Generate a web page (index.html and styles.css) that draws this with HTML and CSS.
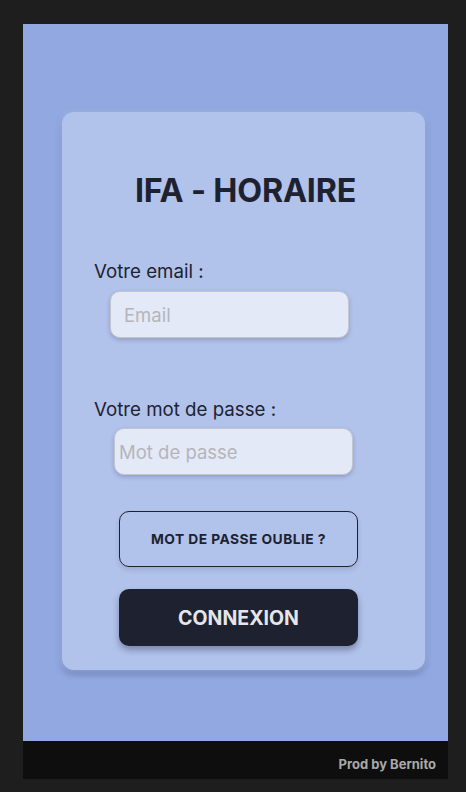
FILE: index.html
```html
<!DOCTYPE html>
<html lang="fr">
<head>
<meta charset="utf-8">
<title>IFA - HORAIRE</title>
<link rel="stylesheet" href="styles.css">
</head>
<body>
<div class="device">
  <main class="screen">
    <form class="card">
      <h1 class="title">IFA - HORAIRE</h1>
      <label class="label label-email">Votre email :</label>
      <input class="field field-email" type="email" placeholder="Email">
      <label class="label label-pass">Votre mot de passe :</label>
      <input class="field field-pass" type="password" placeholder="Mot de passe">
      <button type="button" class="btn btn-outline">MOT DE PASSE OUBLIE ?</button>
      <button type="button" class="btn btn-dark">CONNEXION</button>
    </form>
  </main>
  <footer class="footer">Prod by Bernito</footer>
</div>
</body>
</html>
```
FILE: styles.css
```css
* { box-sizing: border-box; }
html, body {
  margin: 0;
  padding: 0;
  background: #1e1e1e;
  height: 100%;
}
body {
  font-family: Inter, "Noto Sans", sans-serif;
  padding: 24px 18px 0 23px;
}
.device {
  width: 425px;
  display: flex;
  flex-direction: column;
}
.screen {
  height: 717px;
  background: #91a8e0;
  padding: 88px 23px 0 39px;
}
.card {
  width: 363px;
  height: 558px;
  background: #b1c2eb;
  border-radius: 12px;
  box-shadow: 0 0 4px 2px rgba(160,180,230,0.6), 0 4px 6px rgba(40,50,90,0.35);
  display: flex;
  flex-direction: column;
  align-items: flex-start;
  padding: 62px 0 0 0;
}
.title {
  margin: 0;
  align-self: center;
  padding-left: 4px;
  font-size: 32.3px;
  line-height: 34px;
  font-weight: 700;
  color: #1e2230;
  letter-spacing: -0.2px;
}
.label {
  margin-left: 32px;
  font-size: 18.7px;
  line-height: 22px;
  color: #1e2230;
}
.label-email { margin-top: 53px; }
.label-pass { margin-top: 61px; }
.field {
  width: 239px;
  height: 47px;
  border: 1.5px solid #c4c6cf;
  border-radius: 10px;
  background: #e4e9f7;
  box-shadow: 0 2px 4px rgba(40,50,90,0.25);
  font-family: Inter, "Noto Sans", sans-serif;
  font-size: 18.5px;
  color: #1e2230;
  outline: none;
}
.field::placeholder { color: #b4b5bb; }
.field-email { margin: 8px 0 0 48px; padding: 0 13px; }
.field-pass { margin: 7px 0 0 52px; padding: 0 4px; }
.btn {
  width: 239px;
  margin-left: 57px;
  border-radius: 10px;
  font-family: Inter, "Noto Sans", sans-serif;
  font-weight: 700;
  cursor: pointer;
}
.btn-outline {
  margin-top: 36px;
  height: 56px;
  background: transparent;
  border: 1.5px solid #1e2230;
  color: #1e2230;
  font-size: 13.8px;
  letter-spacing: 0.45px;
  box-shadow: 0 3px 5px rgba(40,50,90,0.15);
}
.btn-dark {
  margin-top: 22px;
  height: 57px;
  background: #1e2230;
  border: none;
  color: #e6e6ea;
  font-size: 19.5px;
  box-shadow: 0 4px 6px rgba(20,25,50,0.35);
}
.footer {
  height: 38px;
  background: #0e0e0e;
  color: #a9a9ab;
  font-size: 13px;
  font-weight: 700;
  text-align: right;
  padding: 16px 12px 0 0;
  line-height: 14px;
}
```
